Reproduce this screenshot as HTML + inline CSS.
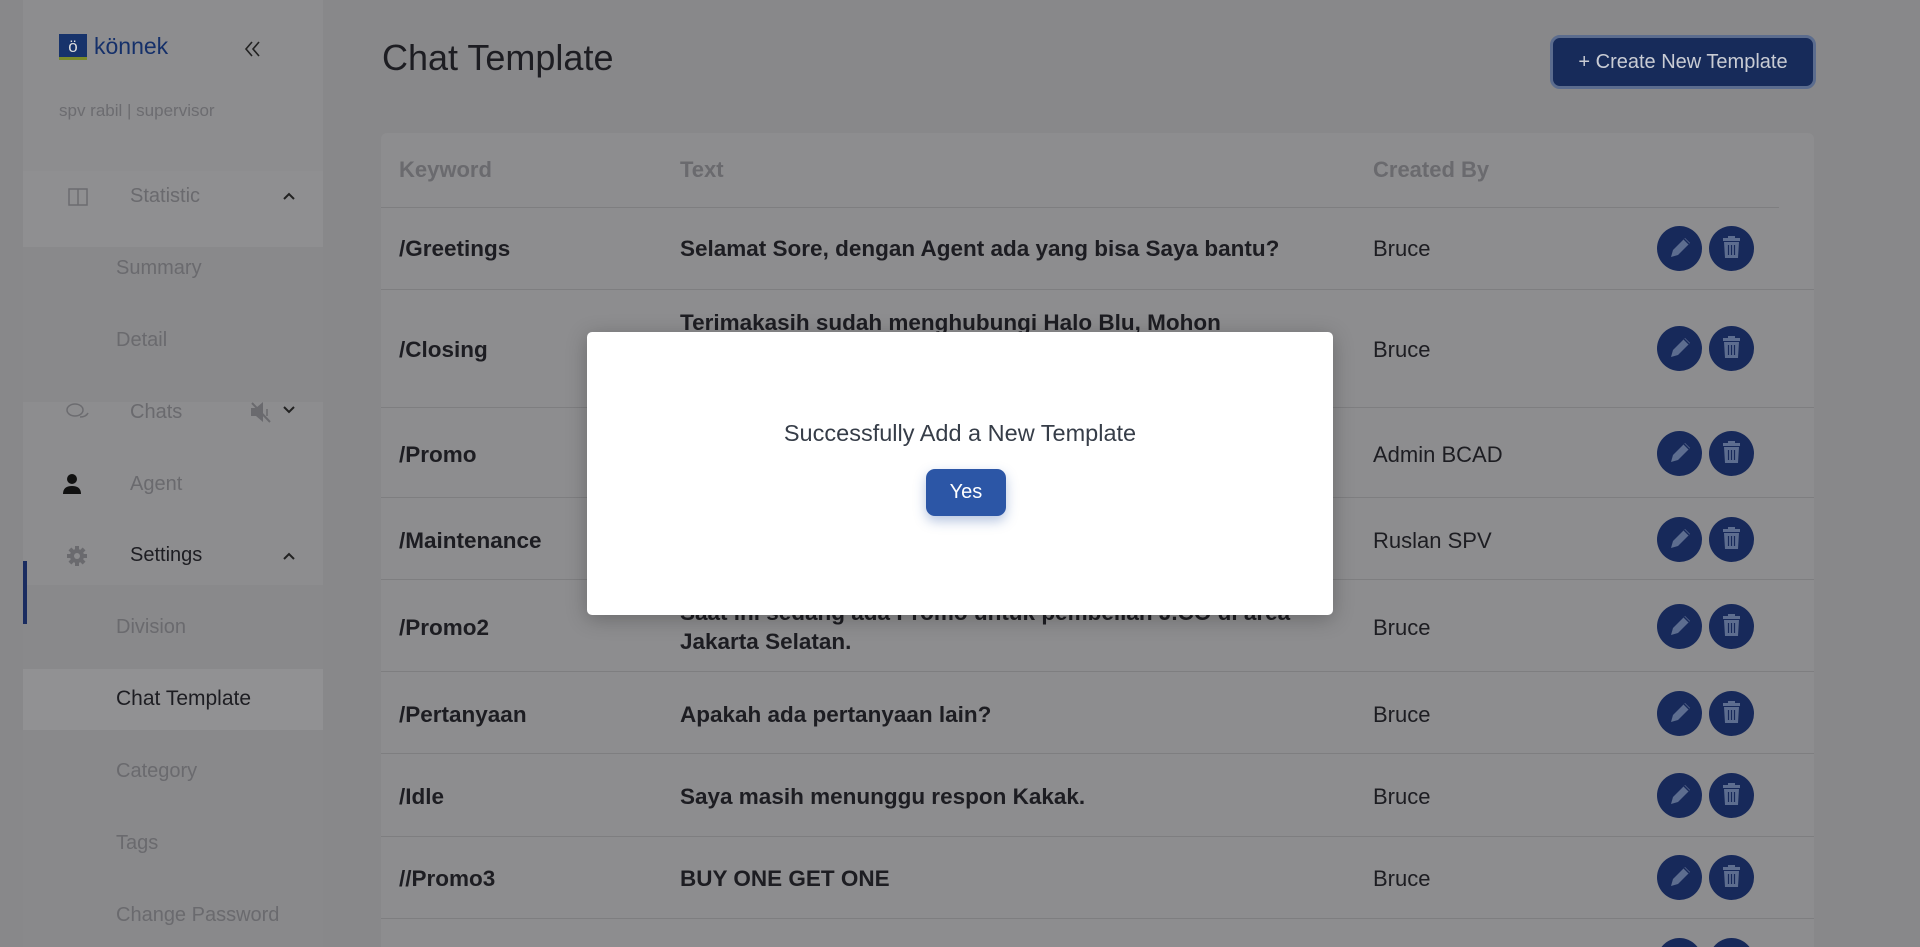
<!DOCTYPE html>
<html><head><meta charset="utf-8"><style>
*{box-sizing:border-box;margin:0;padding:0}
html,body{width:1920px;height:947px;overflow:hidden}
body{background:#88888a;font-family:"Liberation Sans",sans-serif;position:relative}
.abs{position:absolute;white-space:nowrap}
.sb{position:absolute;left:23px;top:0;width:300px;height:947px;background:#8d8d8f}
.sbt{color:#6a6a6e;font-size:20px}
.hd{color:#6a6a6e;font-size:22px;font-weight:bold}
.kw{color:#1d1d22;font-size:22.5px;font-weight:bold}
.cb{color:#1d1d22;font-size:22px}
.ln{position:absolute;left:381px;width:1433px;height:1px;background:#7e7e80}
.btn{position:absolute;width:45px;height:45px;border-radius:50%;background:#17295a}
</style></head><body>
<div class="sb"></div>
<div class="abs" style="left:23px;top:171px;width:300px;height:76px;background:#8f8f91"></div>
<div class="abs" style="left:23px;top:247px;width:300px;height:155px;background:#89898b"></div>
<div class="abs" style="left:23px;top:585px;width:300px;height:362px;background:#89898b"></div>
<div class="abs" style="left:23px;top:669px;width:300px;height:61px;background:#919193"></div>
<div class="abs" style="left:23px;top:561px;width:4px;height:63px;background:#1a2c60"></div>
<!-- logo -->
<div class="abs" style="left:59px;top:34px;width:28px;height:26px;background:#17336b;border-bottom:3px solid #7a8a2a"></div>
<div class="abs" style="left:59px;top:34px;width:28px;height:26px;color:#ddd;font-size:17px;text-align:center;line-height:26px">ö</div>
<div class="abs" style="left:94px;top:33px;font-size:23px;color:#15306a">könnek</div>
<svg class="abs" style="left:243px;top:39px" width="20" height="20" viewBox="0 0 20 20"><path d="M9 3l-6 7 6 7M16 3l-6 7 6 7" fill="none" stroke="#222" stroke-width="1.6"/></svg>
<div class="abs sbt" style="left:59px;top:101px;font-size:17px;color:#6c6c70">spv rabil | supervisor</div>
<!-- sidebar items -->
<svg class="abs" style="left:68px;top:187px" width="20" height="20" viewBox="0 0 20 20"><rect x="1" y="2" width="18" height="16" fill="none" stroke="#6c6c70" stroke-width="1.5"/><line x1="10" y1="2" x2="10" y2="18" stroke="#6c6c70" stroke-width="1.5"/></svg>
<div class="abs sbt" style="left:130px;top:185px">Statistic</div>
<svg class="abs" style="left:282px;top:191px" width="14" height="10" viewBox="0 0 14 10"><path d="M2 8l5-5 5 5" fill="none" stroke="#222" stroke-width="2"/></svg>
<div class="abs sbt" style="left:116px;top:257px">Summary</div>
<div class="abs sbt" style="left:116px;top:329px">Detail</div>
<svg class="abs" style="left:66px;top:402px" width="24" height="20" viewBox="0 0 24 20"><ellipse cx="9" cy="8" rx="8" ry="6" fill="none" stroke="#6c6c70" stroke-width="1.5"/><path d="M14 15 q6 0 8-4" fill="none" stroke="#6c6c70" stroke-width="1.5"/></svg>
<div class="abs sbt" style="left:130px;top:401px">Chats</div>
<svg class="abs" style="left:250px;top:400px" width="22" height="24" viewBox="0 0 22 24"><path d="M1 8h5l7-6v20l-7-6H1z" fill="#6a6a6e"/><line x1="2" y1="3" x2="20" y2="22" stroke="#6a6a6e" stroke-width="2"/><line x1="17" y1="9" x2="17" y2="16" stroke="#6a6a6e" stroke-width="1.5"/></svg>
<svg class="abs" style="left:282px;top:405px" width="14" height="10" viewBox="0 0 14 10"><path d="M2 2l5 5 5-5" fill="none" stroke="#222" stroke-width="2"/></svg>
<svg class="abs" style="left:62px;top:473px" width="20" height="22" viewBox="0 0 20 22"><circle cx="10" cy="6" r="5" fill="#111"/><path d="M1 21 q0-8 9-8 q9 0 9 8z" fill="#111"/></svg>
<div class="abs sbt" style="left:130px;top:473px">Agent</div>
<svg class="abs" style="left:66px;top:545px" width="22" height="22" viewBox="0 0 22 22"><g fill="#6a6a6e"><circle cx="11" cy="11" r="7"/><rect x="9" y="1" width="4" height="20"/><rect x="1" y="9" width="20" height="4"/><rect x="9" y="1" width="4" height="20" transform="rotate(45 11 11)"/><rect x="9" y="1" width="4" height="20" transform="rotate(-45 11 11)"/></g><circle cx="11" cy="11" r="3" fill="#8d8d8f"/></svg>
<div class="abs" style="left:130px;top:544px;font-size:20px;color:#1d1d22">Settings</div>
<svg class="abs" style="left:282px;top:551px" width="14" height="10" viewBox="0 0 14 10"><path d="M2 8l5-5 5 5" fill="none" stroke="#222" stroke-width="2"/></svg>
<div class="abs sbt" style="left:116px;top:616px">Division</div>
<div class="abs" style="left:116px;top:687px;font-size:21px;color:#1d1d22">Chat Template</div>
<div class="abs sbt" style="left:116px;top:760px">Category</div>
<div class="abs sbt" style="left:116px;top:832px">Tags</div>
<div class="abs sbt" style="left:116px;top:904px">Change Password</div>
<!-- main -->
<div class="abs" style="left:382px;top:37px;font-size:36px;color:#1d1d22">Chat Template</div>
<div class="abs" style="left:1550px;top:35px;width:266px;height:54px;border-radius:10px;background:#172b5a;border:3px solid #5b6c8e;color:#c9ccd4;font-size:20px;text-align:center;line-height:48px">+ Create New Template</div>
<div class="abs" style="left:381px;top:133px;width:1433px;height:814px;background:#8d8d8f;border-radius:6px 6px 0 0"></div>
<div class="abs hd" style="left:399px;top:157px">Keyword</div>
<div class="abs hd" style="left:680px;top:157px">Text</div>
<div class="abs hd" style="left:1373px;top:157px">Created By</div>
<div class="ln" style="top:207px;width:1398px"></div>
<div class="ln" style="top:289px"></div>
<div class="ln" style="top:407px"></div>
<div class="ln" style="top:497px"></div>
<div class="ln" style="top:579px"></div>
<div class="ln" style="top:671px"></div>
<div class="ln" style="top:753px"></div>
<div class="ln" style="top:836px"></div>
<div class="ln" style="top:918px"></div>

<div class="abs kw" style="left:399px;top:236px">/Greetings</div>
<div class="abs kw" style="left:680px;top:236px">Selamat Sore, dengan Agent ada yang bisa Saya bantu?</div>
<div class="abs cb" style="left:1373px;top:236px">Bruce</div>
<div class="abs kw" style="left:399px;top:337px">/Closing</div>
<div class="abs kw" style="left:680px;top:310px">Terimakasih sudah menghubungi Halo Blu, Mohon</div>
<div class="abs cb" style="left:1373px;top:337px">Bruce</div>
<div class="abs kw" style="left:399px;top:442px">/Promo</div>
<div class="abs cb" style="left:1373px;top:442px">Admin BCAD</div>
<div class="abs kw" style="left:399px;top:528px">/Maintenance</div>
<div class="abs cb" style="left:1373px;top:528px">Ruslan SPV</div>
<div class="abs kw" style="left:399px;top:615px">/Promo2</div>
<div class="abs kw" style="left:680px;top:600px">Saat ini sedang ada Promo untuk pembelian J.CO di area</div>
<div class="abs kw" style="left:680px;top:629px">Jakarta Selatan.</div>
<div class="abs cb" style="left:1373px;top:615px">Bruce</div>
<div class="abs kw" style="left:399px;top:702px">/Pertanyaan</div>
<div class="abs kw" style="left:680px;top:702px">Apakah ada pertanyaan lain?</div>
<div class="abs cb" style="left:1373px;top:702px">Bruce</div>
<div class="abs kw" style="left:399px;top:784px">/Idle</div>
<div class="abs kw" style="left:680px;top:784px">Saya masih menunggu respon Kakak.</div>
<div class="abs cb" style="left:1373px;top:784px">Bruce</div>
<div class="abs kw" style="left:399px;top:866px">//Promo3</div>
<div class="abs kw" style="left:680px;top:866px">BUY ONE GET ONE</div>
<div class="abs cb" style="left:1373px;top:866px">Bruce</div>

<div id="acts"></div>
<script>
var ys=[248,348,453,539,626,713,795,877,960],h='';
ys.forEach(function(y){
h+='<div class="btn" style="left:1657px;top:'+(y-22)+'px"><svg width="45" height="45" viewBox="0 0 45 45"><path d="M14 31l2-7 12-12 5 5-12 12z" fill="#5d6d8f"/><path d="M27 13l5 5" stroke="#17295a" stroke-width="1.5"/></svg></div>';
h+='<div class="btn" style="left:1709px;top:'+(y-22)+'px"><svg width="45" height="45" viewBox="0 0 45 45"><rect x="14" y="12" width="17" height="3" fill="#5d6d8f"/><rect x="19" y="10" width="7" height="3" fill="#5d6d8f"/><path d="M15 16h15l-1 16h-13z" fill="#5d6d8f"/><path d="M19.5 19v10M22.5 19v10M25.5 19v10" stroke="#17295a" stroke-width="1.2"/></svg></div>';
});
document.getElementById('acts').innerHTML=h;
</script>
<!-- modal -->
<div class="abs" style="left:587px;top:332px;width:746px;height:283px;background:#fff;border-radius:5px;box-shadow:0 4px 20px rgba(0,0,0,.25)"></div>
<div class="abs" style="left:587px;top:420px;width:746px;text-align:center;font-size:23.5px;color:#363d48">Successfully Add a New Template</div>
<div class="abs" style="left:926px;top:469px;width:80px;height:47px;border-radius:9px;background:#2c56a6;color:#fff;font-size:20px;text-align:center;line-height:47px;box-shadow:0 5px 12px rgba(44,86,166,.35)">Yes</div>
</body></html>
